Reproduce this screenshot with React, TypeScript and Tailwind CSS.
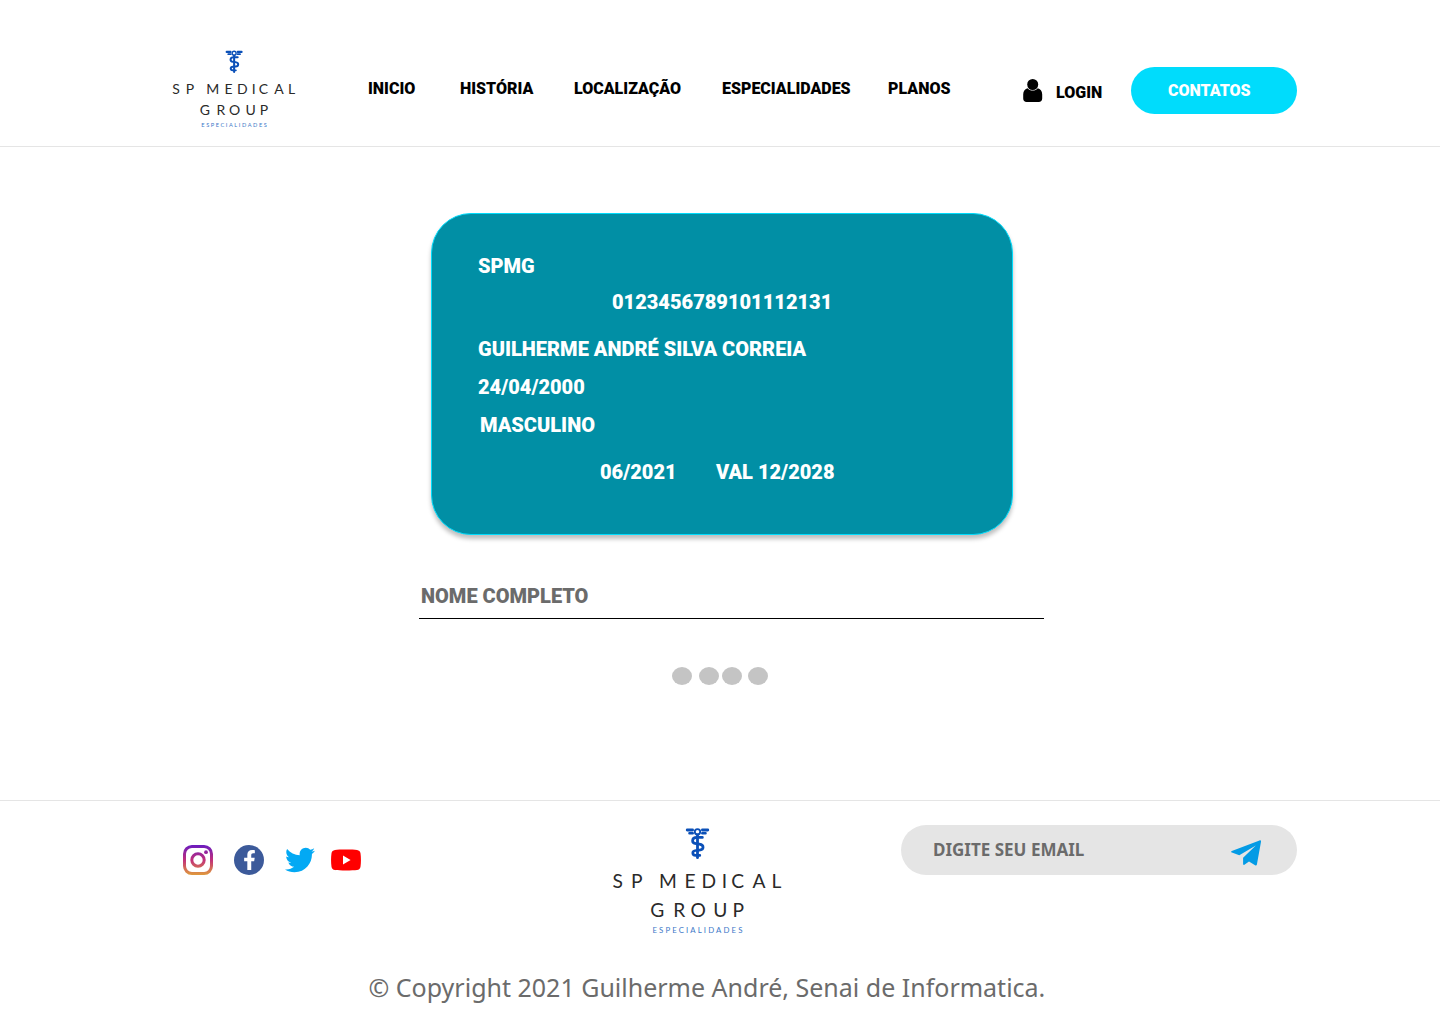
import React from "react";
import { FaFacebookF, FaTwitter } from "react-icons/fa";

function Logo({ className }: { className: string }) {
  return (
    <svg viewBox="608 825 180 112" className={className} fill="none">
      <g stroke="#0b50b8" strokeLinecap="round">
        <circle cx="697.5" cy="831.8" r="2.700" strokeWidth="1.900" />
        <path d="M687.200 830h5.400M702.400 830h5.400" strokeWidth="2.800" />
        <path d="M689.4 833.200h3.400M702.2 833.200h3.400" strokeWidth="2.400" />
        <path d="M697.500 835v22.700" strokeWidth="2.800" />
        <path
          d="M702.400 837.400h-5.400c-5.600 0-5.800 5.700-1 6.300l3.400.4c5 .7 4.800 5.700 0 6.100l-3.600.3c-4 .4-4 4.500 0 4.900h4"
          strokeWidth="2.700"
        />
      </g>
      <g fill="#2a2a2a" fontFamily="Lato" fontWeight="400" fontSize="19.200">
        <text y="887.8" x="612.6 631 659.1 684.4 701.6 721.7 731.2 752.6 771.4">SPMEDICAL</text>
        <text y="916.6" x="650.2 673.200 690.4 713.3 732.6">GROUP</text>
      </g>
      <text x="652.4" y="932.800" fontFamily="Lato" fontWeight="400" fontSize="7.800" textLength="90" fill="#3c78c8">
        ESPECIALIDADES
      </text>
    </svg>
  );
}

function UserIcon() {
  return (
    <svg viewBox="0 0 20 24" className="mt-[79px] ml-[72px] h-6 w-5" fill="#000">
      <path d="M4.600 9.200C2.200 9.600.2 12 .2 15.200v4.300C.2 21.600 1.600 23 3.600 23h12.200c2 0 3.400-1.400 3.400-3.500v-4.300c0-3.200-2-5.600-4.400-6-1.200 1.500-3 2.300-5.100 2.300s-3.900-.8-5.100-2.300z" />
      <circle cx="9.700" cy="5.500" r="5.500" />
    </svg>
  );
}

function Instagram() {
  return (
    <svg viewBox="0 0 30 30" className="size-[30px]" fill="none">
      <defs>
        <linearGradient id="ig" x1="0" y1="0" x2="0" y2="30" gradientUnits="userSpaceOnUse">
          <stop offset="0" stopColor="#6a1bc0" />
          <stop offset="0.5" stopColor="#c1307a" />
          <stop offset="1" stopColor="#e09a3c" />
        </linearGradient>
      </defs>
      <rect x="1.500" y="1.500" width="27" height="27" rx="7.400" stroke="url(#ig)" strokeWidth="3" />
      <circle cx="15" cy="15" r="6.200" stroke="url(#ig)" strokeWidth="3" />
      <circle cx="23" cy="7.200" r="1.900" fill="url(#ig)" />
    </svg>
  );
}

function YouTube() {
  return (
    <svg viewBox="0 0 30 22" className="ml-4 h-[22px] w-[30px]">
      <path
        d="M4 .9C8 .3 22 .3 26 .9c2 .3 3.200 1.400 3.500 3.400.6 4 .6 9.400 0 13.400-.3 2-1.500 3.100-3.500 3.400-4 .6-18 .6-22 0-2-.3-3.200-1.400-3.500-3.400-.6-4-.6-9.400 0-13.400C.8 2.300 2 1.200 4 .9z"
        fill="#f00"
      />
      <path d="M12 6.600v8.800l7.600-4.400z" fill="#fff" />
    </svg>
  );
}

function PlaneIcon() {
  return (
    <svg viewBox="0 0 32 28" className="mt-[14px] mr-[35px] h-7 w-8" fill="#039be5">
      <path d="M1.800 11.900 29.500 1.400c1-.3 1.700.3 1.500 1.300L26.900 25.500c-.2 1-1 1.300-1.800.8L19 22.400l-4.600 3.300c-.7.500-1.300.2-1.300-.6v-6.300L25.800 6.400 9.300 16.300 1.900 13.600c-1.100-.4-1.100-1.300-.1-1.700z" />
    </svg>
  );
}

export default function App() {
  return (
    <div className="flex h-[1024px] w-[1440px] flex-col overflow-hidden bg-white font-['Roboto',sans-serif] font-black text-black">
      <header className="flex h-[147px] items-start border-b border-[#e5e5e5] pl-[169px]">
        <Logo className="mt-12 h-[82px] w-[131px]" />
        <nav className="mt-[77px] ml-[68px] flex w-[583px] text-base leading-6 whitespace-nowrap">
          <a className="w-[92px]">INICIO</a>
          <a className="w-[114px]">HISTÓRIA</a>
          <a className="w-[148px]">LOCALIZAÇÃO</a>
          <a className="w-[166px]">ESPECIALIDADES</a>
          <a>PLANOS</a>
        </nav>
        <UserIcon />
        <a className="mt-[81px] ml-[13px] w-[75px] text-base leading-6">LOGIN</a>
        <button className="mt-[67px] h-[47px] w-[166px] rounded-full bg-[#00dcfc] pl-[37px] text-left text-base text-white">
          CONTATOS
        </button>
      </header>

      <main className="flex h-[653px] flex-col">
        <section className="mt-[66px] ml-[431px] flex h-[322px] w-[582px] flex-col rounded-[40px] border border-[#00dcfc] bg-[#018fa5] pt-10 pl-[46px] text-xl leading-6 text-white shadow-[0_4px_4px_rgba(0,0,0,0.25)]">
          <p>SPMG</p>
          <p className="mt-3 ml-[134px]">0123456789101112131</p>
          <p className="mt-[23px]">GUILHERME ANDRÉ SILVA CORREIA</p>
          <p className="mt-[14px]">24/04/2000</p>
          <p className="mt-[14px] ml-0.5">MASCULINO</p>
          <div className="mt-[23px] ml-[122px] flex">
            <p className="w-[116px]">06/2021</p>
            <p>VAL 12/2028</p>
          </div>
        </section>
        <div className="mt-[49px] ml-[419px] h-[35px] w-[625px] border-b border-black pl-0.5 text-xl leading-6 text-[#6b6b6b]">
          NOME COMPLETO
        </div>
        <div className="mt-12 ml-[672px] flex">
          <span className="h-[18px] w-5 rounded-[50%] bg-[#c4c4c4]" />
          <span className="ml-[7px] h-[18px] w-5 rounded-[50%] bg-[#c4c4c4]" />
          <span className="ml-[3px] h-[18px] w-5 rounded-[50%] bg-[#c4c4c4]" />
          <span className="ml-1.5 h-[18px] w-5 rounded-[50%] bg-[#c4c4c4]" />
        </div>
      </main>

      <footer className="flex h-[224px] flex-col border-t border-[#e5e5e5]">
        <div className="flex h-[160px] items-start">
          <div className="mt-11 ml-[183px] flex h-[30px] w-[425px] items-center">
            <Instagram />
            <span className="ml-[21px] flex size-[30px] items-center justify-center rounded-full bg-[#3c5a9a] text-white">
              <FaFacebookF className="h-5 w-[13px]" />
            </span>
            <FaTwitter className="ml-[21px] size-[30px] text-[#03a9f4]" />
            <YouTube />
          </div>
          <Logo className="mt-6 h-[112px] w-[180px]" />
          <form className="mt-6 ml-[113px] flex h-[50px] w-[396px] items-start justify-between rounded-full bg-[#e5e5e5] pl-8">
            <span className="mt-[13px] font-['Noto_Sans',sans-serif] text-[17px] leading-6 font-bold text-[#6b6b6b]">
              DIGITE SEU EMAIL
            </span>
            <PlaneIcon />
          </form>
        </div>
        <p className="mt-2 ml-[368.5px] font-['Noto_Sans',sans-serif] text-[25px] leading-9 font-normal whitespace-nowrap text-[#6b6b6b]">
          © Copyright 2021 Guilherme André, Senai de Informatica.
        </p>
      </footer>
    </div>
  );
}
